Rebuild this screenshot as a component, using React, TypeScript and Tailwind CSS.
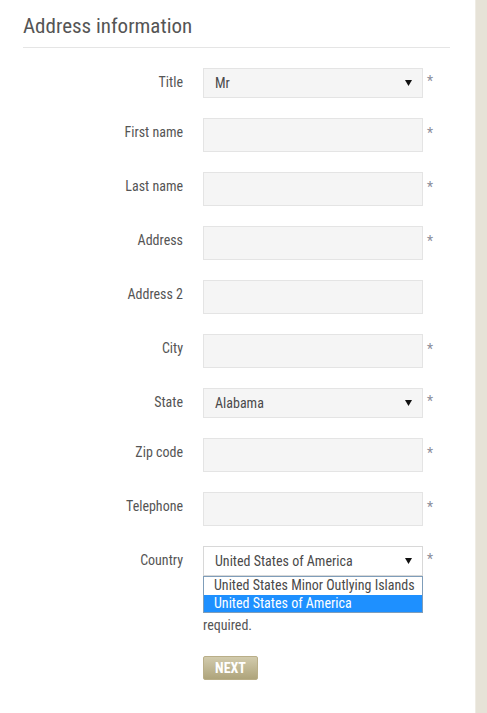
import React from "react";

const font = "font-['Roboto_Condensed','Roboto',sans-serif]";

const Asterisk = () => <span className="-mt-[4px] ml-[4px] text-[14px] leading-[20px] text-[#8b8e9c]">*</span>;

const Arrow = () => (
  <svg width="7" height="6" viewBox="0 0 7 6" className="absolute right-[10px] top-1/2 -translate-y-1/2">
    <path d="M0 0h7L3.5 6z" fill="#111" />
  </svg>
);

const Row = ({ label, children, required = true }: { label: string; children: React.ReactNode; required?: boolean }) => (
  <div className="flex items-start">
    <label className="w-[160px] shrink-0 pt-[4px] text-right text-[14px] leading-[20px] text-[#555]">{label}</label>
    <div className="ml-[20px] flex items-center">
      {children}
      {required && <Asterisk />}
    </div>
  </div>
);

const TextInput = () => <div className="h-[34px] w-[220px] border border-[#e4e4e4] bg-[#f5f5f5]" />;

const Select = ({ value, open = false }: { value: string; open?: boolean }) => (
  <div
    className={`relative flex h-[30px] w-[220px] items-center border pl-[11px] text-[14px] text-[#4a4a4a] ${
      open ? "border-[#d8d8d8] bg-white" : "border-[#e4e4e4] bg-[#f5f5f5]"
    }`}
  >
    {value}
    <Arrow />
  </div>
);

export default function App() {
  return (
    <div className={`flex min-h-[713px] bg-white ${font}`}>
      <main className="flex-1">
        <div className="ml-[23px] w-[427px]">
          <h2 className="border-b border-[#e5e5e5] pt-[12px] pb-[7px] text-[21px] leading-[28px] text-[#555]">
            Address information
          </h2>

          <form className="mt-[20px] flex flex-col gap-[20px]">
            <Row label="Title">
              <Select value="Mr" />
            </Row>
            <Row label="First name">
              <TextInput />
            </Row>
            <Row label="Last name">
              <TextInput />
            </Row>
            <Row label="Address">
              <TextInput />
            </Row>
            <Row label="Address 2" required={false}>
              <TextInput />
            </Row>
            <Row label="City">
              <TextInput />
            </Row>
            <Row label="State">
              <Select value="Alabama" />
            </Row>
            <Row label="Zip code">
              <TextInput />
            </Row>
            <Row label="Telephone">
              <TextInput />
            </Row>
            <div className="relative">
              <Row label="Country">
                <Select value="United States of America" open />
              </Row>
              <ul className="absolute left-[180px] top-[30px] z-10 w-[220px] border border-[#7f9db9] bg-white text-[14px] leading-[17.5px] text-[#4a4a4a]">
                <li className="pl-[10px]">United States Minor Outlying Islands</li>
                <li className="bg-[#1e90ff] pl-[10px] text-white">United States of America</li>
              </ul>
            </div>
          </form>

          <p className="ml-[180px] mt-[39px] text-[14px] leading-[20px] text-[#555]">required.</p>

          <button
            type="button"
            className="ml-[180px] mt-[21px] h-[24px] w-[55px] rounded-[2px] border border-[#b9ae88] bg-gradient-to-b from-[#d2cbad] to-[#aea47b] text-[14px] font-bold leading-[22px] text-white"
          >
            NEXT
          </button>
        </div>
      </main>
      <aside className="w-[12px] shrink-0 border-l border-[#efece4] bg-[#e6e2d7]" />
    </div>
  );
}
